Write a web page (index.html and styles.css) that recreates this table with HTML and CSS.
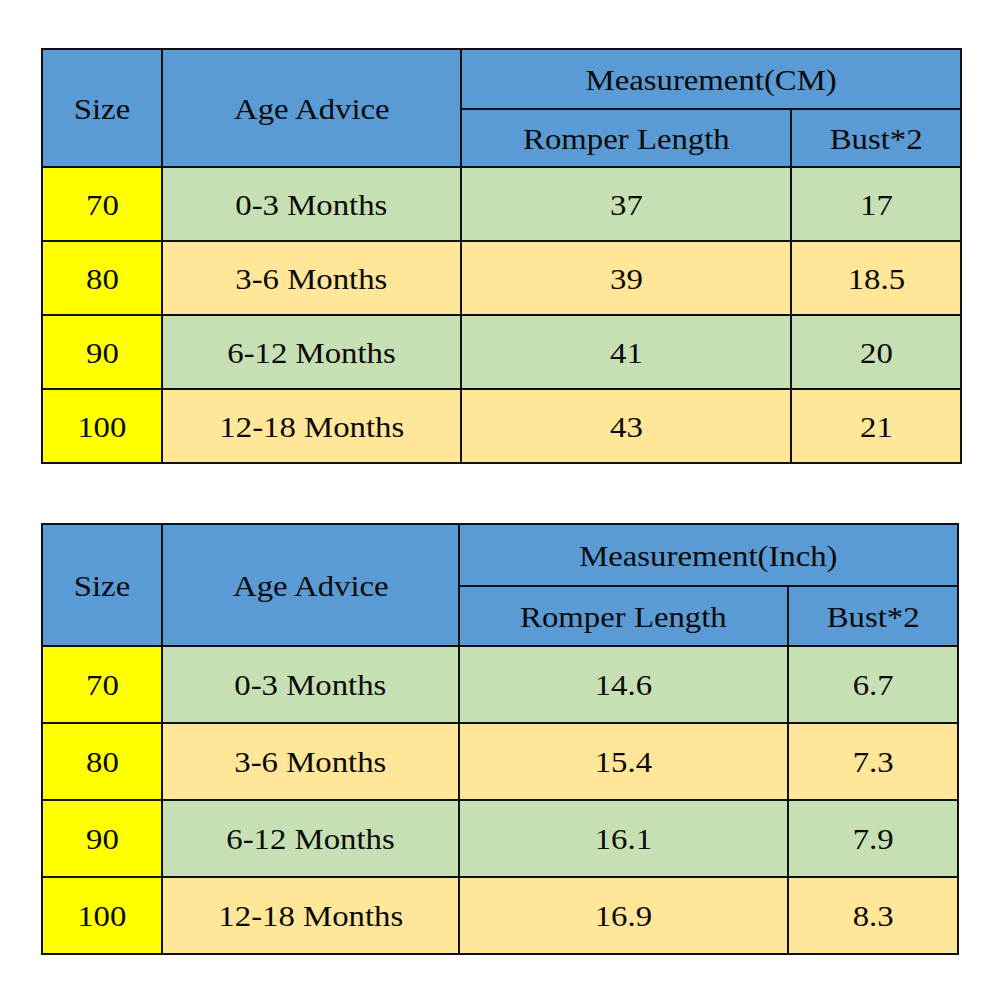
FILE: index.html
```html
<!DOCTYPE html>
<html>
<head>
<meta charset="utf-8">
<link rel="stylesheet" href="styles.css">
</head>
<body>
<div class="page">
  <table class="size-table t1">
    <colgroup>
      <col class="c-size"><col class="c-age"><col class="c-len"><col class="c-bust">
    </colgroup>
    <tr class="h1">
      <th rowspan="2" class="blue"><span>Size</span></th>
      <th rowspan="2" class="blue"><span>Age Advice</span></th>
      <th colspan="2" class="blue"><span>Measurement(CM)</span></th>
    </tr>
    <tr class="h2">
      <th class="blue"><span>Romper Length</span></th>
      <th class="blue"><span>Bust*2</span></th>
    </tr>
    <tr class="r green"><td class="yellow"><span>70</span></td><td><span>0-3 Months</span></td><td><span>37</span></td><td><span>17</span></td></tr>
    <tr class="r peach"><td class="yellow"><span>80</span></td><td><span>3-6 Months</span></td><td><span>39</span></td><td><span>18.5</span></td></tr>
    <tr class="r green"><td class="yellow"><span>90</span></td><td><span>6-12 Months</span></td><td><span>41</span></td><td><span>20</span></td></tr>
    <tr class="r peach"><td class="yellow"><span>100</span></td><td><span>12-18 Months</span></td><td><span>43</span></td><td><span>21</span></td></tr>
  </table>

  <table class="size-table t2">
    <colgroup>
      <col class="c-size"><col class="c-age2"><col class="c-len2"><col class="c-bust">
    </colgroup>
    <tr class="h1">
      <th rowspan="2" class="blue"><span>Size</span></th>
      <th rowspan="2" class="blue"><span>Age Advice</span></th>
      <th colspan="2" class="blue"><span>Measurement(Inch)</span></th>
    </tr>
    <tr class="h2">
      <th class="blue"><span>Romper Length</span></th>
      <th class="blue"><span>Bust*2</span></th>
    </tr>
    <tr class="r green"><td class="yellow"><span>70</span></td><td><span>0-3 Months</span></td><td><span>14.6</span></td><td><span>6.7</span></td></tr>
    <tr class="r peach"><td class="yellow"><span>80</span></td><td><span>3-6 Months</span></td><td><span>15.4</span></td><td><span>7.3</span></td></tr>
    <tr class="r green"><td class="yellow"><span>90</span></td><td><span>6-12 Months</span></td><td><span>16.1</span></td><td><span>7.9</span></td></tr>
    <tr class="r peach"><td class="yellow"><span>100</span></td><td><span>12-18 Months</span></td><td><span>16.9</span></td><td><span>8.3</span></td></tr>
  </table>
</div>
</body>
</html>
```

FILE: styles.css
```css
html, body {
  margin: 0;
  padding: 0;
  background: #ffffff;
}
.page {
  padding: 48px 0 0 41px;
  display: flex;
  flex-direction: column;
  gap: 59px;
  align-items: flex-start;
}
.size-table {
  border-collapse: collapse;
  table-layout: fixed;
  font-family: "Liberation Serif", "Times New Roman", serif;
  font-size: 29px;
  color: #0a0a0a;
}
.size-table th,
.size-table td {
  border: 2px solid #111111;
  text-align: center;
  vertical-align: middle;
  padding: 0;
  font-weight: normal;
}
.size-table span {
  display: inline-block;
  transform: scaleX(1.13);
  line-height: 1;
  position: relative;
  top: 1px;
}
.t1 { width: 921px; }
.t2 { width: 918px; }
.c-size { width: 120px; }
.c-age { width: 299px; }
.c-len { width: 330px; }
.c-age2 { width: 297px; }
.c-len2 { width: 329px; }
.c-bust { width: 170px; }

.blue { background: #5b9bd5; }
.yellow { background: #ffff00; }
.green td { background: #c6e0b4; }
.peach td { background: #ffe699; }
.green td.yellow, .peach td.yellow { background: #ffff00; }

.t1 .h1 { height: 60px; }
.t1 .h2 { height: 58px; }
.t1 .r { height: 74px; }
.t2 .h1 { height: 62px; }
.t2 .h2 { height: 60px; }
.t2 .r { height: 77px; }
```
